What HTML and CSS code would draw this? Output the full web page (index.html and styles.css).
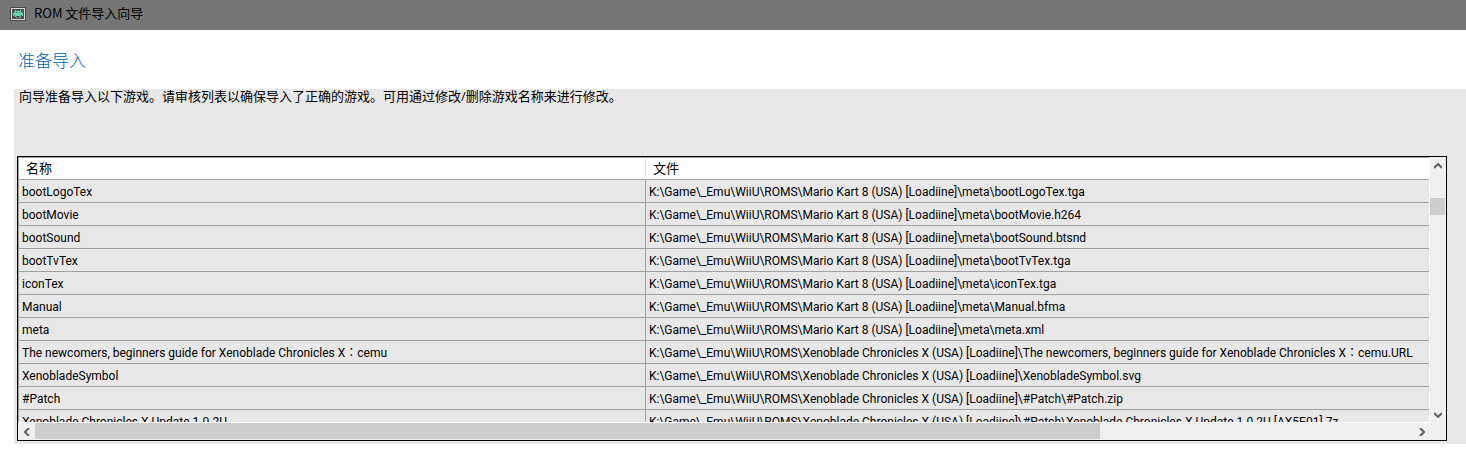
FILE: index.html
```html
<!DOCTYPE html>
<html lang="zh-CN">
  <head>
    <meta charset="UTF-8" />
    <meta name="viewport" content="width=device-width, initial-scale=1.0" />
    <title>ROM 文件导入向导</title>
    <link rel="stylesheet" href="styles.css">
  </head>
  <body>
    <header class="title-bar">
      <svg class="app-icon" viewBox="0 0 16 14" shape-rendering="crispEdges" aria-hidden="true">
        <rect width="16" height="14" fill="#4a4a4a" />
        <rect x="1" y="1" width="14" height="12" fill="#d8d8d8" />
        <rect x="2" y="2" width="12" height="10" fill="#505050" />
        <path
          fill="#5fd6b4"
          d="M5 3h1v1h-1zM10 3h1v1h-1zM5 4h6v1h1v1h1v3h-1v-1h-1v2h-1v1h-1v-1h1v-1h-4v1h1v1h-1v-1h-1v-2h-1v1h-1v-3h1v-1h1z"
        />
        <path fill="#505050" d="M6 5h1v1h-1zM9 5h1v1h-1z" />
      </svg>
      <span>ROM 文件导入向导</span>
    </header>

    <h1 class="page-title">准备导入</h1>

    <main class="panel">
      <p class="intro">向导准备导入以下游戏。请审核列表以确保导入了正确的游戏。可用通过修改/删除游戏名称来进行修改。</p>

      <div class="list">
        <div class="viewport">
          <table class="games">
            <colgroup>
              <col class="col-name" />
              <col />
            </colgroup>
            <thead>
              <tr>
                <th scope="col">名称</th>
                <th scope="col">文件</th>
              </tr>
            </thead>
            <tbody lang="ja">
              <tr>
                <td>bootLogoTex</td>
                <td>K:\Game\_Emu\WiiU\ROMS\Mario Kart 8 (USA) [Loadiine]\meta\bootLogoTex.tga</td>
              </tr>
              <tr>
                <td>bootMovie</td>
                <td>K:\Game\_Emu\WiiU\ROMS\Mario Kart 8 (USA) [Loadiine]\meta\bootMovie.h264</td>
              </tr>
              <tr>
                <td>bootSound</td>
                <td>K:\Game\_Emu\WiiU\ROMS\Mario Kart 8 (USA) [Loadiine]\meta\bootSound.btsnd</td>
              </tr>
              <tr>
                <td>bootTvTex</td>
                <td>K:\Game\_Emu\WiiU\ROMS\Mario Kart 8 (USA) [Loadiine]\meta\bootTvTex.tga</td>
              </tr>
              <tr>
                <td>iconTex</td>
                <td>K:\Game\_Emu\WiiU\ROMS\Mario Kart 8 (USA) [Loadiine]\meta\iconTex.tga</td>
              </tr>
              <tr>
                <td>Manual</td>
                <td>K:\Game\_Emu\WiiU\ROMS\Mario Kart 8 (USA) [Loadiine]\meta\Manual.bfma</td>
              </tr>
              <tr>
                <td>meta</td>
                <td>K:\Game\_Emu\WiiU\ROMS\Mario Kart 8 (USA) [Loadiine]\meta\meta.xml</td>
              </tr>
              <tr>
                <td>The newcomers, beginners guide for Xenoblade Chronicles X：cemu</td>
                <td>K:\Game\_Emu\WiiU\ROMS\Xenoblade Chronicles X (USA) [Loadiine]\The newcomers, beginners guide for Xenoblade Chronicles X：cemu.URL</td>
              </tr>
              <tr>
                <td>XenobladeSymbol</td>
                <td>K:\Game\_Emu\WiiU\ROMS\Xenoblade Chronicles X (USA) [Loadiine]\XenobladeSymbol.svg</td>
              </tr>
              <tr>
                <td>#Patch</td>
                <td>K:\Game\_Emu\WiiU\ROMS\Xenoblade Chronicles X (USA) [Loadiine]\#Patch\#Patch.zip</td>
              </tr>
              <tr>
                <td>Xenoblade Chronicles X Update 1.0.2U</td>
                <td>K:\Game\_Emu\WiiU\ROMS\Xenoblade Chronicles X (USA) [Loadiine]\#Patch\Xenoblade Chronicles X Update 1.0.2U [AX5E01].7z</td>
              </tr>
            </tbody>
          </table>
        </div>

        <div class="scrollbar vertical">
          <button type="button" aria-label="向上滚动">
            <svg viewBox="0 0 8 6"><path d="M0 5l4-4 4 4" /></svg>
          </button>
          <div class="track"><div class="thumb"></div></div>
          <button type="button" aria-label="向下滚动">
            <svg viewBox="0 0 8 6"><path d="M0 1l4 4 4-4" /></svg>
          </button>
        </div>

        <div class="scrollbar horizontal">
          <button type="button" aria-label="向左滚动">
            <svg viewBox="0 0 6 8"><path d="M5 0l-4 4 4 4" /></svg>
          </button>
          <div class="track"><div class="thumb"></div></div>
          <button type="button" aria-label="向右滚动">
            <svg viewBox="0 0 6 8"><path d="M1 0l4 4-4 4" /></svg>
          </button>
        </div>
      </div>
    </main>
  </body>
</html>
```

FILE: styles.css
```css
:root {
  --title-gray: #767676;
  --panel-gray: #e8e8e8;
  --line-gray: #a0a0a0;
  --scroll-gray: #f0f0f0;
  --thumb-gray: #cdcdcd;
  --heading-blue: #0063a8;
}

* {
  box-sizing: border-box;
}

body {
  margin: 0;
  font-family: "Open Sans", "Noto Sans CJK SC", sans-serif;
  font-size: 12px;
  background-color: white;
  color: black;
}

.title-bar {
  display: flex;
  align-items: center;
  gap: 8px;
  height: 30px;
  padding: 0 10px 2px;
  font-family: "Noto Sans CJK SC", sans-serif;
  font-size: 13px;
  line-height: 16px;
  background-color: var(--title-gray);
}

.title-bar span {
  padding-bottom: 2px;
}

.app-icon {
  width: 16px;
  height: 14px;
}

.page-title {
  margin: 0;
  padding: 19px 18px 16px;
  font-size: 17px;
  font-weight: 300;
  line-height: 24px;
  color: var(--heading-blue);
}

.panel {
  margin-left: 14px;
  padding: 0 19px 3px 3px;
  background-color: var(--panel-gray);
}

.intro {
  margin: 0;
  padding: 0 2px 53px;
  font-size: 13px;
  line-height: 14px;
}

.list {
  display: grid;
  grid-template-columns: minmax(0, 1fr) 16px;
  border: 1px solid black;
  background-color: var(--scroll-gray);
}

.viewport {
  height: 266px;
  overflow: hidden;
  border: 1px solid white;
  border-top-color: var(--line-gray);
  border-left-color: var(--line-gray);
  background-color: var(--panel-gray);
}

.games {
  width: 100%;
  table-layout: fixed;
  border-collapse: separate;
  border-spacing: 0;
}

.col-name {
  width: 627px;
}

.games th,
.games td {
  height: 23px;
  padding: 0 3px;
  border-bottom: 1px solid var(--line-gray);
  line-height: 22px;
  text-align: left;
  white-space: nowrap;
  overflow: hidden;
}

.games td {
  padding-top: 2px;
  font-family: Roboto, "Noto Sans CJK JP", sans-serif;
  line-height: 20px;
}

.games th {
  height: 22px;
  padding: 0 7px;
  font-size: 13px;
  font-weight: normal;
  line-height: 21px;
  background-color: white;
}

.games td:first-child {
  border-right: 1px solid var(--line-gray);
}

.games th:first-child {
  border-right: 1px solid #e5e5e5;
}

.scrollbar {
  display: flex;
}

.scrollbar button {
  display: flex;
  align-items: center;
  justify-content: center;
  width: 17px;
  height: 17px;
  padding: 0;
  border: none;
  background: none;
}

.scrollbar svg {
  width: 8px;
  height: 6px;
  fill: none;
  stroke: #606060;
  stroke-width: 2;
}

.vertical button {
  width: 16px;
}

.horizontal svg {
  width: 6px;
  height: 8px;
}

.track {
  flex: 1;
}

.thumb {
  background-color: var(--thumb-gray);
}

.vertical {
  flex-direction: column;
}

.vertical .track {
  padding: 24px 1px 0 0;
}

.vertical .thumb {
  height: 17px;
}

.horizontal .track {
  padding-bottom: 1px;
}

.horizontal .thumb {
  width: calc(100% * 17 / 22);
  height: 16px;
}
```
